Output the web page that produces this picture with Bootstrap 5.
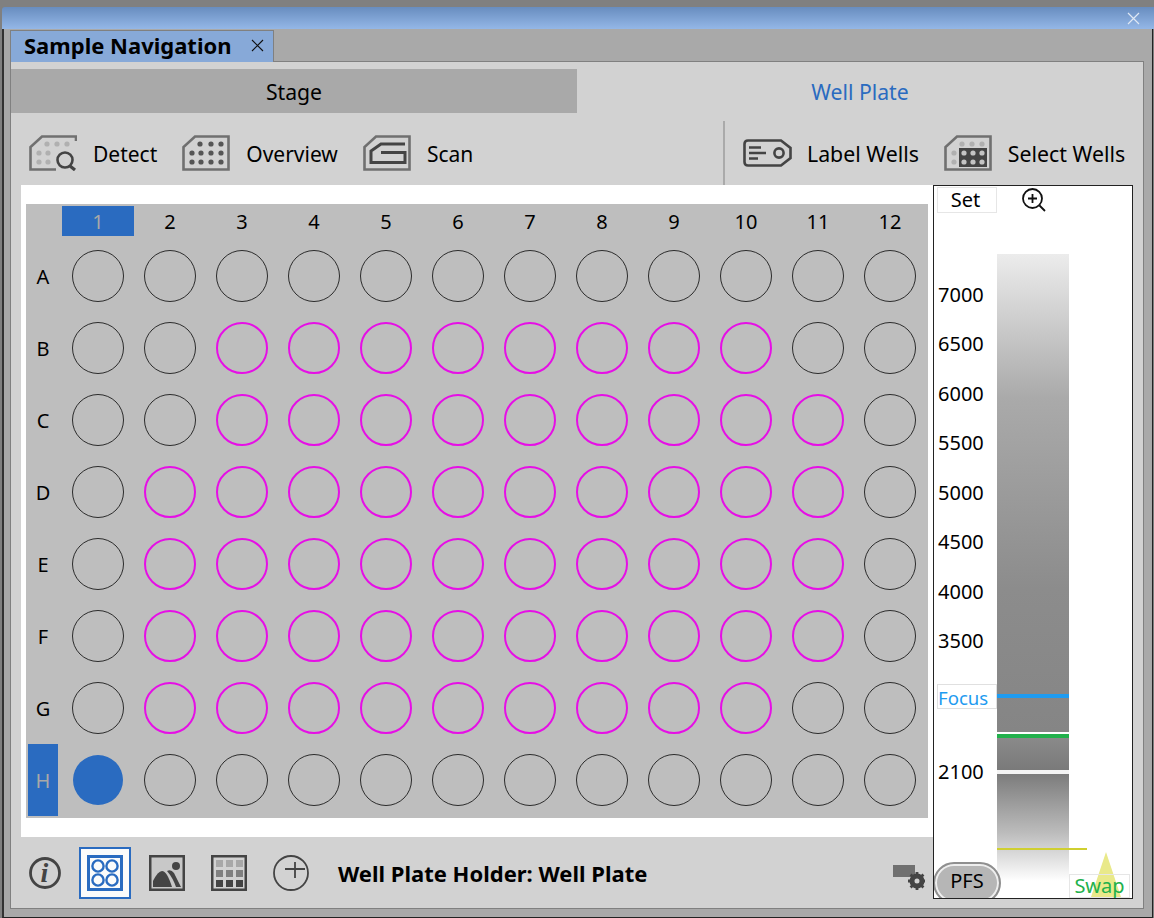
<!DOCTYPE html>
<html lang="en">
<head>
  <meta charset="UTF-8" />
  <title>Sample Navigation</title>
  <link href="https://cdn.jsdelivr.net/npm/bootstrap@5.3.2/dist/css/bootstrap.min.css" rel="stylesheet"/>
  <style>
    html, body { height: 918px; overflow: hidden; }
    body { background: #808080; font-family: "Noto Sans", "Liberation Sans", sans-serif; font-size: 20px; color: #000; }
    .app-win { width: 1154px; height: 918px; padding-top: 7px; }
    .title-strip { height: 22px; margin-left: 2px; background: linear-gradient(#688dbf, #94b7e7); border-top-left-radius: 3px; padding-right: 14px; }
    .dock { height: 889px; margin: 0 1px 0 2px; padding: 1px 8px 7px 6px; background: #a9a9a9; border-left: 2px solid #333; border-right: 1px solid #222; border-bottom: 1px solid #222; }
    .dock-tab { width: 264px; height: 32px; padding: 0 9px 2px 13px; background: #87a9d8; border: 1px solid #808080; border-bottom: 0; position: relative; z-index: 1; font-weight: 700; font-size: 22px; }
    .dock-panel { height: 848px; margin-top: -1px; background: #d2d2d2; border: 1px solid #808080; padding-top: 7px; }
    .mode-tab { flex: 1 1 0; height: 44px; line-height: 46px; text-align: center; font-size: 21.2px; }
    .mode-off { background: #a9a9a9; }
    .mode-on { color: #2a6bc0; }
    .tool-row { height: 72px; }
    .tool-left { width: 712px; padding: 22px 0 0 18px; gap: 25px; font-size: 21px; }
    .tool-left .tool-text { padding-top: 4px; }
    .tool-right { margin-top: 8px; height: 64px; padding: 14px 0 0 18px; gap: 25px; border-left: 2px solid #aaa; font-size: 21.3px; }
    .tool-item { gap: 16px; height: 36px; }
    .tool-text { padding-top: 2px; }
    .tool-tag { gap: 15px; }
    .plate-col { width: 912px; margin-left: 10px; }
    .plate-box { height: 652px; background: #fff; padding: 19px 5px; }
    .plate-grid { display: grid; grid-template-columns: 36px repeat(12, 72px); grid-template-rows: 36px repeat(8, 72px); height: 614px; background: #bebebe; }
    .col-head { text-align: center; height: 30px; line-height: 32px; margin-top: 2px; }
    .row-head { width: 30px; margin-left: 2px; padding-top: 2px; }
    .head-on { background: #2a6bc0; color: #a8a8a8; }
    .well { width: 52px; height: 52px; border-radius: 50%; border: 1.5px solid #2c2c2c; }
    .well-mark { border: 2px solid #e60fe6; }
    .well-on { background: #2a6bc0; border: 0; width: 50px; height: 50px; }
    .foot-bar { height: 62px; padding: 10px 0 0 8px; }
    .foot-sel { width: 52px; height: 52px; background: #fbfbfb; border: 2.5px solid #2a6bc0; margin: 0 18px; }
    .foot-next { margin-left: 26px; }
    .foot-title { font-weight: 700; font-size: 22px; margin-left: 29px; padding-top: 1px; }
    .foot-gear { margin: 0 8px 9px auto; }
    .ruler { width: 200px; height: 714px; background: #fff; border: 1px solid #222; position: relative; overflow: hidden; padding: 1px 0 0 3px; }
    .ruler-btn { width: 60px; height: 26px; line-height: 24px; text-align: center; border: 1px solid #e6e6e6; background: #fff; padding-right: 3px; }
    .ruler-tick { position: absolute; left: 4px; line-height: 26px; }
    .ruler-focus { position: absolute; left: 3px; top: 498px; width: 60px; height: 25px; line-height: 23px; border: 1px solid #e0e0e0; color: #1e9bf0; font-size: 18.6px; padding-top: 1px; }
    .ruler-bar { position: absolute; left: 63px; top: 68px; width: 72px; }
    .bar-top { height: 478px; background: linear-gradient(#ececec 0%, #aaa 30%, #8c8c8c 70%, #858585 100%); }
    .bar-gap { height: 2px; background: #fff; }
    .bar-green { height: 4px; background: #22b14c; }
    .bar-dark { height: 32px; background: linear-gradient(#8a8a8a, #7a7a7a); }
    .bar-white { height: 4px; background: #f4f4f4; }
    .bar-fade { height: 107px; background: linear-gradient(#7c7c7c, #bcbcbc 55%, #fff 100%); }
    .line-focus { position: absolute; left: 63px; top: 508px; width: 72px; height: 4px; background: #1e9bf0; }
    .line-yellow { position: absolute; left: 63px; top: 662px; width: 90px; height: 2px; background: #cfcf30; }
    .swap-tri { position: absolute; left: 156px; top: 666px; width: 0; height: 0; border-left: 16px solid transparent; border-right: 16px solid transparent; border-bottom: 48px solid #e9e98a; }
    .swap-btn { position: absolute; left: 135px; top: 688px; width: 61px; height: 24px; line-height: 22px; border: 1px solid #e6e6e6; color: #22b14c; text-align: center; font-size: 20px; }
    .pfs-btn { position: absolute; left: -1px; top: 676px; width: 68px; height: 42px; line-height: 33px; text-align: center; border: 2px solid #8f8f8f; border-radius: 21px; background: #b6b6b6; box-shadow: inset 0 0 0 2px #eee; }
  </style>
</head>
<body>
  <div class="app-win">
    <div class="title-strip d-flex justify-content-end align-items-center">
      <svg width="13" height="13" viewBox="0 0 13 13"><path d="M1 1L12 12M12 1L1 12" stroke="#dfe8f4" stroke-width="1.2"/></svg>
    </div>
    <div class="dock">
      <div class="dock-tab d-flex justify-content-between align-items-center">
        <span>Sample Navigation</span>
        <svg width="13" height="13" viewBox="0 0 13 13"><path d="M1 1L12 12M12 1L1 12" stroke="#111" stroke-width="1.1"/></svg>
      </div>
      <div class="dock-panel">
        <div class="d-flex">
          <div class="mode-tab mode-off">Stage</div>
          <div class="mode-tab mode-on">Well Plate</div>
        </div>

        <div class="tool-row d-flex">
          <div class="tool-left d-flex">
            <div class="tool-item d-flex align-items-center">
              <svg width="48" height="36" viewBox="0 0 48 36" fill="none">
                <path d="M47 6V1.5H13L1.5 12V34.5H27" stroke="#707070" stroke-width="2.6"/>
                <g fill="#b0b0b0"><circle cx="18" cy="9" r="2.6"/><circle cx="28" cy="9" r="2.6"/><circle cx="38" cy="9" r="2.6"/><circle cx="10" cy="18" r="2.6"/><circle cx="19" cy="18" r="2.6"/><circle cx="10" cy="27" r="2.6"/><circle cx="19" cy="27" r="2.6"/></g>
                <circle cx="36" cy="25" r="7.5" stroke="#444" stroke-width="2.6"/><path d="M41 31L46 35" stroke="#444" stroke-width="3.2"/>
              </svg>
              <span class="tool-text">Detect</span>
            </div>
            <div class="tool-item d-flex align-items-center">
              <svg width="48" height="36" viewBox="0 0 48 36" fill="none">
                <path d="M46.5 1.5H13L1.5 12V34.5H46.5Z" stroke="#707070" stroke-width="2.6"/>
                <g fill="#555"><circle cx="18" cy="9" r="2.6"/><circle cx="29" cy="9" r="2.6"/><circle cx="39" cy="9" r="2.6"/><circle cx="10" cy="18" r="2.6"/><circle cx="19" cy="18" r="2.6"/><circle cx="29" cy="18" r="2.6"/><circle cx="39" cy="18" r="2.6"/><circle cx="10" cy="27" r="2.6"/><circle cx="19" cy="27" r="2.6"/><circle cx="29" cy="27" r="2.6"/><circle cx="39" cy="27" r="2.6"/></g>
              </svg>
              <span class="tool-text">Overview</span>
            </div>
            <div class="tool-item d-flex align-items-center">
              <svg width="48" height="36" viewBox="0 0 48 36" fill="none">
                <path d="M46.5 1.5H13L1.5 12V34.5H46.5Z" stroke="#707070" stroke-width="2.6"/>
                <path d="M42 9H18L8 16V27.5H42V17.5H18" stroke="#444" stroke-width="3"/>
              </svg>
              <span class="tool-text">Scan</span>
            </div>
          </div>
          <div class="tool-right d-flex">
            <div class="tool-item tool-tag d-flex align-items-center">
              <svg width="49" height="28" viewBox="0 0 49 28" fill="none">
                <path d="M5 1.5H38L47.5 9V19L38 26.5H5Q1.5 26.5 1.5 23V5Q1.5 1.5 5 1.5Z" stroke="#444" stroke-width="2.6"/>
                <path d="M6 8.5H18M6 14H23M6 19.5H15" stroke="#444" stroke-width="2.6"/>
                <circle cx="36" cy="14" r="4.6" stroke="#444" stroke-width="2.6"/>
              </svg>
              <span class="tool-text">Label Wells</span>
            </div>
            <div class="tool-item d-flex align-items-center">
              <svg width="48" height="36" viewBox="0 0 48 36" fill="none">
                <path d="M46.5 1.5H13L1.5 12V34.5H46.5Z" stroke="#707070" stroke-width="2.6"/>
                <g fill="#b0b0b0"><circle cx="18" cy="9" r="2.6"/><circle cx="28" cy="9" r="2.6"/><circle cx="38" cy="9" r="2.6"/><circle cx="10" cy="18" r="2.6"/><circle cx="10" cy="27" r="2.6"/></g>
                <rect x="15" y="13" width="28" height="19" fill="#444"/>
                <g fill="#c4c4c4"><circle cx="20" cy="18" r="2.6"/><circle cx="29" cy="18" r="2.6"/><circle cx="38" cy="18" r="2.6"/><circle cx="20" cy="27" r="2.6"/><circle cx="29" cy="27" r="2.6"/><circle cx="38" cy="27" r="2.6"/></g>
              </svg>
              <span class="tool-text">Select Wells</span>
            </div>
          </div>
        </div>

        <div class="d-flex">
          <div class="plate-col">
            <div class="plate-box">
              <div class="plate-grid" id="plateGrid"></div>
            </div>
            <div class="foot-bar d-flex align-items-center">
              <svg width="32" height="32" viewBox="0 0 32 32" fill="none">
                <circle cx="16" cy="16" r="14.5" stroke="#444" stroke-width="2.8"/>
                <text x="15.5" y="25" text-anchor="middle" font-family="Liberation Serif" font-style="italic" font-weight="700" font-size="28" fill="#444">i</text>
              </svg>
              <div class="foot-sel d-flex align-items-center justify-content-center">
                <svg width="36" height="36" viewBox="0 0 36 36" fill="none">
                  <rect x="1.5" y="1.5" width="33" height="33" stroke="#2a6bc0" stroke-width="3"/>
                  <g stroke="#2a6bc0" stroke-width="2.4"><circle cx="11" cy="11" r="5.6"/><circle cx="25" cy="11" r="5.6"/><circle cx="11" cy="25" r="5.6"/><circle cx="25" cy="25" r="5.6"/></g>
                </svg>
              </div>
              <svg width="36" height="36" viewBox="0 0 36 36" fill="none">
                <rect x="1.25" y="1.25" width="33.5" height="33.5" fill="#c8c8c8" stroke="#444" stroke-width="2.5"/>
                <circle cx="27" cy="11" r="4" fill="#444"/>
                <path d="M4 32V26Q9 16 13 16Q18 16 23 32Z" fill="#444"/>
                <path d="M18 16Q22 14 25 18L32 32H27Q24 23 18 16Z" fill="#444"/>
              </svg>
              <svg class="foot-next" width="36" height="36" viewBox="0 0 36 36" fill="none">
                <rect x="1.25" y="1.25" width="33.5" height="33.5" stroke="#444" stroke-width="2.5"/>
                <g fill="#a8a8a8"><rect x="5" y="5" width="7" height="7"/><rect x="15" y="5" width="7" height="7"/><rect x="25" y="5" width="7" height="7"/></g>
                <g fill="#808080"><rect x="5" y="15" width="7" height="7"/><rect x="15" y="15" width="7" height="7"/><rect x="25" y="15" width="7" height="7"/></g>
                <g fill="#444"><rect x="5" y="25" width="7" height="7"/><rect x="15" y="25" width="7" height="7"/><rect x="25" y="25" width="7" height="7"/></g>
              </svg>
              <svg class="foot-next" width="36" height="36" viewBox="0 0 36 36" fill="none">
                <circle cx="18" cy="18" r="17" stroke="#444" stroke-width="1.8"/>
                <path d="M22 7V23M12 14H32" stroke="#444" stroke-width="1.8"/>
              </svg>
              <span class="foot-title">Well Plate Holder: Well Plate</span>
              <svg class="foot-gear align-self-end" width="32" height="25" viewBox="0 0 32 25">
                <rect x="0" y="0" width="22" height="12" fill="#707070"/>
                <circle cx="24" cy="16" r="5" fill="none" stroke="#444" stroke-width="5"/>
                <path d="M24 7V10M24 22V25M15 16H18M30 16H32M17.6 9.6L19.7 11.7M28.3 20.3L30.4 22.4M30.4 9.6L28.3 11.7M19.7 20.3L17.6 22.4" stroke="#444" stroke-width="2.8"/>
              </svg>
            </div>
          </div>

          <div class="ruler">
            <div class="d-flex align-items-center">
              <div class="ruler-btn">Set</div>
              <svg class="ms-4" width="26" height="26" viewBox="0 0 26 26" fill="none">
                <circle cx="11.5" cy="11.5" r="9.5" stroke="#111" stroke-width="1.8"/>
                <path d="M18.5 18.5L24 24M7 11.5H16M11.5 7V16" stroke="#111" stroke-width="1.8"/>
              </svg>
            </div>
            <div id="rulerTicks"></div>
            <div class="ruler-bar">
              <div class="bar-top"></div>
              <div class="bar-gap"></div>
              <div class="bar-green"></div>
              <div class="bar-dark"></div>
              <div class="bar-white"></div>
              <div class="bar-fade"></div>
            </div>
            <div class="line-focus"></div>
            <div class="ruler-focus">Focus</div>
            <div class="line-yellow"></div>
            <div class="swap-tri"></div>
            <div class="swap-btn">Swap</div>
            <div class="pfs-btn">PFS</div>
          </div>
        </div>
      </div>
    </div>
  </div>

  <script src="https://cdn.jsdelivr.net/npm/bootstrap@5.3.2/dist/js/bootstrap.bundle.min.js"></script>
  <script>
    // wells that carry the magenta ring, by row: [first column, last column]
    const marked = { B: [3, 10], C: [3, 11], D: [2, 11], E: [2, 11], F: [2, 11], G: [2, 10] };
    const grid = document.getElementById("plateGrid");

    function addCell(cls, text) {
      const el = document.createElement("div");
      el.className = cls;
      el.textContent = text || "";
      grid.appendChild(el);
      return el;
    }

    addCell("");
    for (let c = 1; c <= 12; c++) {
      addCell("col-head" + (c === 1 ? " head-on" : ""), c);
    }
    "ABCDEFGH".split("").forEach(row => {
      addCell("row-head d-flex align-items-center justify-content-center" + (row === "H" ? " head-on" : ""), row);
      for (let c = 1; c <= 12; c++) {
        const range = marked[row];
        const cell = addCell("d-flex align-items-center justify-content-center");
        const well = document.createElement("div");
        well.className = "well";
        if (range && c >= range[0] && c <= range[1]) well.classList.add("well-mark");
        if (row === "H" && c === 1) well.classList.add("well-on");
        cell.appendChild(well);
      }
    });

    const ticks = document.getElementById("rulerTicks");
    const tickValues = [7000, 6500, 6000, 5500, 5000, 4500, 4000, 3500, 2100];
    tickValues.forEach(v => {
      const t = document.createElement("div");
      t.className = "ruler-tick";
      t.textContent = v;
      const y = v === 2100 ? 573 : 96 + (7000 - v) * 0.0989;
      t.style.top = y + "px";
      ticks.appendChild(t);
    });
  </script>
</body>
</html>
